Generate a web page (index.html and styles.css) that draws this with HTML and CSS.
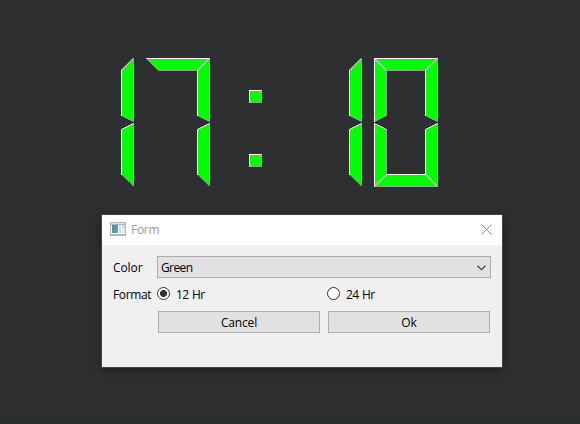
FILE: index.html
```html
<!DOCTYPE html>
<html lang="en">
<head>
<meta charset="utf-8">
<title>Form</title>
<link rel="stylesheet" href="styles.css">
</head>
<body>
<svg class="defs" aria-hidden="true">
  <defs>
    <g id="seg-top"><path class="fill" d="M.5 .5H63.5L51.5 12.5H12.5Z"/><path class="lo" d="M.5 .5L12.5 12.5H51.5L63.5 .5"/><path class="hi" d="M0 .5H64"/></g>
    <g id="seg-bottom"><path class="fill" d="M.5 128.5H63.5L51.5 116.5H12.5Z"/><path class="lo" d="M.5 128.5H63.5"/><path class="mid" d="M63.5 128.5L51.5 116.5M.5 128.5L12.5 116.5"/><path class="hi" d="M12.5 116.5H51.5"/></g>
    <g id="seg-ur"><path class="fill" d="M63.5 1.5V63.5L51.5 57.5V12.5Z"/><path class="lo" d="M63.5 1V63.5L51.5 57.5"/><path class="mid" d="M63.5 .5L51.5 12.5"/><path class="hi" d="M51.5 12V58"/></g>
    <g id="seg-lr"><path class="fill" d="M63.5 65.5V127.5L51.5 116.5V71.5Z"/><path class="lo" d="M63.5 65V128L51.5 116"/><path class="hi" d="M63.5 65.5L51.5 71.5V117"/></g>
    <g id="seg-ul"><path class="fill" d="M.5 .5L12.5 12.5V57.5L.5 63.5Z"/><path class="mid" d="M.5 .5L12.5 12.5"/><path class="lo" d="M12.5 12.5V57.5L.5 63.5"/><path class="hi" d="M.5 0V64"/></g>
    <g id="seg-ll"><path class="fill" d="M.5 65.5L12.5 71.5V116.5L.5 128.5Z"/><path class="lo" d="M12.5 71V116.5L.5 128.5"/><path class="hi" d="M12.5 71.5L.5 65.5V129"/></g>
  </defs>
</svg>
<main class="desktop">
  <div class="clock" role="img" aria-label="17:10">
    <svg class="digit"><use href="#seg-ur"/><use href="#seg-lr"/></svg>
    <svg class="digit"><use href="#seg-top"/><use href="#seg-ur"/><use href="#seg-lr"/></svg>
    <div class="colon"><i></i><i></i></div>
    <svg class="digit"><use href="#seg-ur"/><use href="#seg-lr"/></svg>
    <svg class="digit"><use href="#seg-top"/><use href="#seg-ul"/><use href="#seg-ll"/><use href="#seg-ur"/><use href="#seg-lr"/><use href="#seg-bottom"/></svg>
  </div>
  <section class="dialog">
    <header class="titlebar">
      <svg class="app-icon" width="16" height="14" viewBox="0 0 16 14">
        <defs><linearGradient id="pane" x1="0" y1="0" x2="1" y2="1"><stop offset="0" stop-color="#4a85b4"/><stop offset="1" stop-color="#5fb183"/></linearGradient></defs>
        <path fill="#b3b7bb" d="M0 0H16V14H0Z"/><path fill="#fff" d="M1 3H15V12H1Z"/><path fill="#dfe3e6" d="M1 1H15V2H1Z"/>
        <path fill="url(#pane)" d="M2 3H8V11H2Z"/><path fill="#d6dade" d="M9 3H11V11H9Z"/><path fill="#c8dfd4" d="M12 3H15V7H12Z"/><path fill="#e4e7e9" d="M12 8H15V11H12Z"/>
      </svg>
      <span class="title">Form</span>
      <svg class="close" width="11" height="11" viewBox="0 0 11 11"><path d="M.5 .5L10.5 10.5M10.5 .5L.5 10.5"/></svg>
    </header>
    <form class="form">
      <div class="row combo-row">
        <span class="label">Color</span>
        <div class="combo"><span class="green">Green</span><svg width="9" height="6" viewBox="0 0 9 6"><path d="M.5 .7L4.5 4.7L8.5 .7"/></svg></div>
      </div>
      <div class="row radio-row">
        <span class="label format-label">Format</span>
        <span class="option"><i class="radio checked"></i><span class="hr">12 Hr</span></span>
        <span class="option"><i class="radio"></i><span class="hr">24 Hr</span></span>
      </div>
      <div class="buttons"><div class="button">Cancel</div><div class="button">Ok</div></div>
    </form>
  </section>
</main>
</body>
</html>
```
FILE: styles.css
```css
* { box-sizing: border-box; }
body { margin: 0; background: #2e2f31; font: 12px/16px "Open Sans", "Noto Sans", sans-serif; color: #000; }
.defs { display: block; width: 0; height: 0; }
.desktop { height: 424px; padding-top: 58px; overflow: hidden; border-bottom: 3px solid #302b2d; }
.clock { display: flex; gap: 12px; margin-left: 70px; height: 129px; }
.digit { display: block; width: 64px; height: 129px; }
.fill { fill: #0f0; }
.lo, .mid, .hi { fill: none; stroke-width: 1; }
.lo { stroke: #a0a0a0; }
.mid { stroke: #c4c4c4; stroke-width: 1.4; }
.hi { stroke: #fff; }
.colon { width: 64px; padding: 32px 0 0 27px; }
.colon i { display: block; width: 13px; height: 13px; margin-bottom: 51px; background: #0f0; border: 1px solid; border-color: #fff #a0a0a0 #a0a0a0 #fff; }
.dialog { width: 402px; height: 154px; margin: 27px 0 0 101px; border: 1px solid #444; background: #f0f0f0; box-shadow: 0 2px 9px rgba(0, 0, 0, .4); }
.titlebar { display: flex; align-items: center; height: 30px; padding: 0 10px 0 8px; background: #fff; color: #999; }
.app-icon { margin-top: -3px; }
.title { margin-left: 5px; letter-spacing: -.3px; }
.close { margin-left: auto; margin-top: -2px; fill: none; stroke: #888; }
.form { padding: 11px 11px 0; }
.row { display: flex; align-items: center; }
.label { flex: none; width: 44px; padding-top: 1px; letter-spacing: -.1px; }
.format-label { letter-spacing: -.35px; }
.combo { display: flex; align-items: center; width: 334px; height: 22px; padding: 0 4px 0 3px; border: 1px solid #adadad; background: #e1e1e1; }
.combo svg { margin-left: auto; margin-top: 2px; fill: none; stroke: #444; stroke-width: 1.3; }
.green { padding-top: 2px; letter-spacing: -.6px; }
.radio-row { height: 16px; margin-top: 8px; }
.option { display: flex; flex: none; align-items: center; width: 170px; }
.radio { flex: none; width: 13px; height: 13px; margin: -2px 6px 0 0; border: 1px solid #333; border-radius: 50%; background: #fff; }
.hr { padding-top: 1px; letter-spacing: -.6px; word-spacing: 1px; }
.checked { background: radial-gradient(circle, #333 0 3.2px, #fff 3.8px); }
.buttons { display: flex; gap: 8px; margin: 9px 0 0 45px; }
.button { width: 162px; height: 22px; border: 1px solid #adadad; background: #e1e1e1; text-align: center; line-height: 22px; letter-spacing: -.15px; }
```
